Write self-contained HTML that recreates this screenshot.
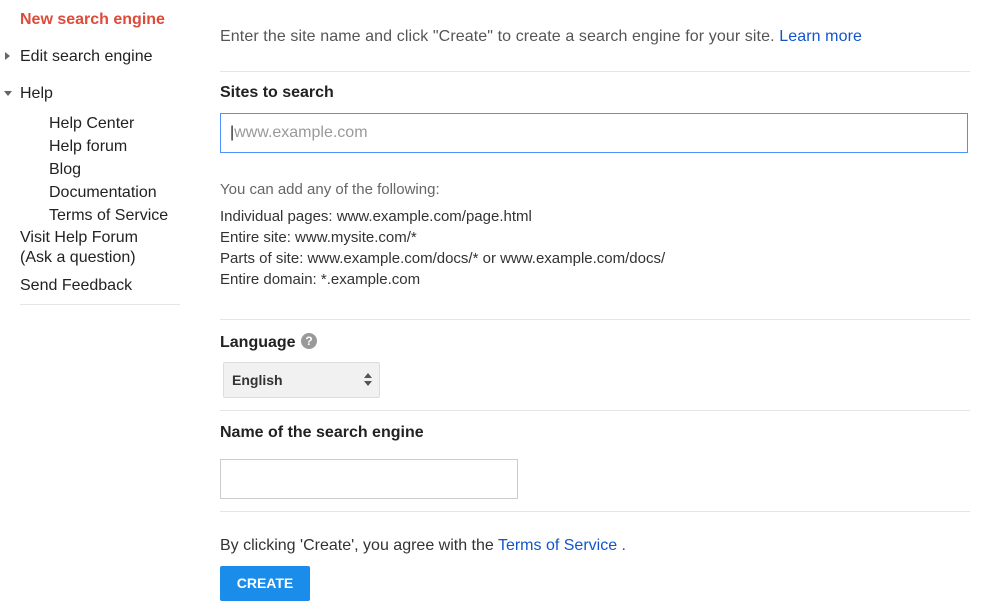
<!DOCTYPE html>
<html><head><meta charset="utf-8"><style>
body{margin:0;width:1004px;height:608px;background:#fff;font-family:"Liberation Sans",Arial,sans-serif;position:relative;overflow:hidden;color:#222}
.a{position:absolute;white-space:nowrap;line-height:20px}
.s{font-size:16px}
.g{color:#555}
.b{font-weight:bold}
.hr{position:absolute;height:1px;background:#e5e5e5}
.l{color:#1155cc}
.t{font-size:15px;color:#333}
</style></head><body>
<div class="a s b" style="left:20px;top:10px;color:#dd4b39">New search engine</div>
<div class="a" style="left:5px;top:52px;width:0;height:0;border-left:5px solid #666;border-top:4px solid transparent;border-bottom:4px solid transparent;line-height:0"></div>
<div class="a s" style="left:20px;top:47px">Edit search engine</div>
<div class="a" style="left:4px;top:91px;width:0;height:0;border-top:5px solid #666;border-left:4px solid transparent;border-right:4px solid transparent;line-height:0"></div>
<div class="a s" style="left:20px;top:84px">Help</div>
<div class="a s" style="left:49px;top:114px">Help Center</div>
<div class="a s" style="left:49px;top:137px">Help forum</div>
<div class="a s" style="left:49px;top:160px">Blog</div>
<div class="a s" style="left:49px;top:183px">Documentation</div>
<div class="a s" style="left:49px;top:206px">Terms of Service</div>
<div class="a s" style="left:20px;top:228px">Visit Help Forum</div>
<div class="a s" style="left:20px;top:248px">(Ask a question)</div>
<div class="a s" style="left:20px;top:276px">Send Feedback</div>
<div class="hr" style="left:20px;top:304px;width:160px"></div>

<div class="a s g" style="left:220px;top:27px;letter-spacing:0.1px">Enter the site name and click "Create" to create a search engine for your site. <span class="l">Learn more</span></div>
<div class="hr" style="left:220px;top:71px;width:750px"></div>
<div class="a s b" style="left:220px;top:83px">Sites to search</div>
<div style="position:absolute;left:220px;top:113px;width:746px;height:38px;border:1px solid #4d90fe"></div>
<div class="a s" style="left:230px;top:123px;color:#999"><span style="color:#222">|</span>www.example.com</div>
<div class="a t" style="left:220px;top:180px;color:#666">You can add any of the following:</div>
<div class="a t" style="left:220px;top:207px">Individual pages: www.example.com/page.html</div>
<div class="a t" style="left:220px;top:228px">Entire site: www.mysite.com/*</div>
<div class="a t" style="left:220px;top:249px">Parts of site: www.example.com/docs/* or www.example.com/docs/</div>
<div class="a t" style="left:220px;top:270px">Entire domain: *.example.com</div>
<div class="hr" style="left:220px;top:319px;width:750px"></div>
<div class="a s b" style="left:220px;top:333px">Language</div>
<div class="a" style="left:301px;top:333px;width:16px;height:16px;border-radius:50%;background:#999;color:#fff;font-size:12px;font-weight:bold;line-height:16px;text-align:center">?</div>
<div style="position:absolute;left:223px;top:362px;width:155px;height:34px;border:1px solid #ddd;border-radius:2px;background:#f1f1f1"></div>
<div class="a b" style="left:232px;top:370px;font-size:14px;color:#333">English</div>
<div class="a" style="left:364px;top:373px;width:0;height:0;border-bottom:5px solid #555;border-left:4px solid transparent;border-right:4px solid transparent;line-height:0"></div>
<div class="a" style="left:364px;top:381px;width:0;height:0;border-top:5px solid #555;border-left:4px solid transparent;border-right:4px solid transparent;line-height:0"></div>
<div class="hr" style="left:220px;top:410px;width:750px"></div>
<div class="a s b" style="left:220px;top:423px">Name of the search engine</div>
<div style="position:absolute;left:220px;top:459px;width:296px;height:38px;border:1px solid #ccc"></div>
<div class="hr" style="left:220px;top:511px;width:750px"></div>
<div class="a s" style="left:220px;top:536px;color:#333">By clicking 'Create', you agree with the <span class="l">Terms of Service</span> <span class="l">.</span></div>
<div class="a b" style="left:220px;top:566px;width:90px;height:35px;background:#1a8cea;border-radius:2px;color:#fff;font-size:14px;line-height:35px;text-align:center">CREATE</div>
</body></html>
